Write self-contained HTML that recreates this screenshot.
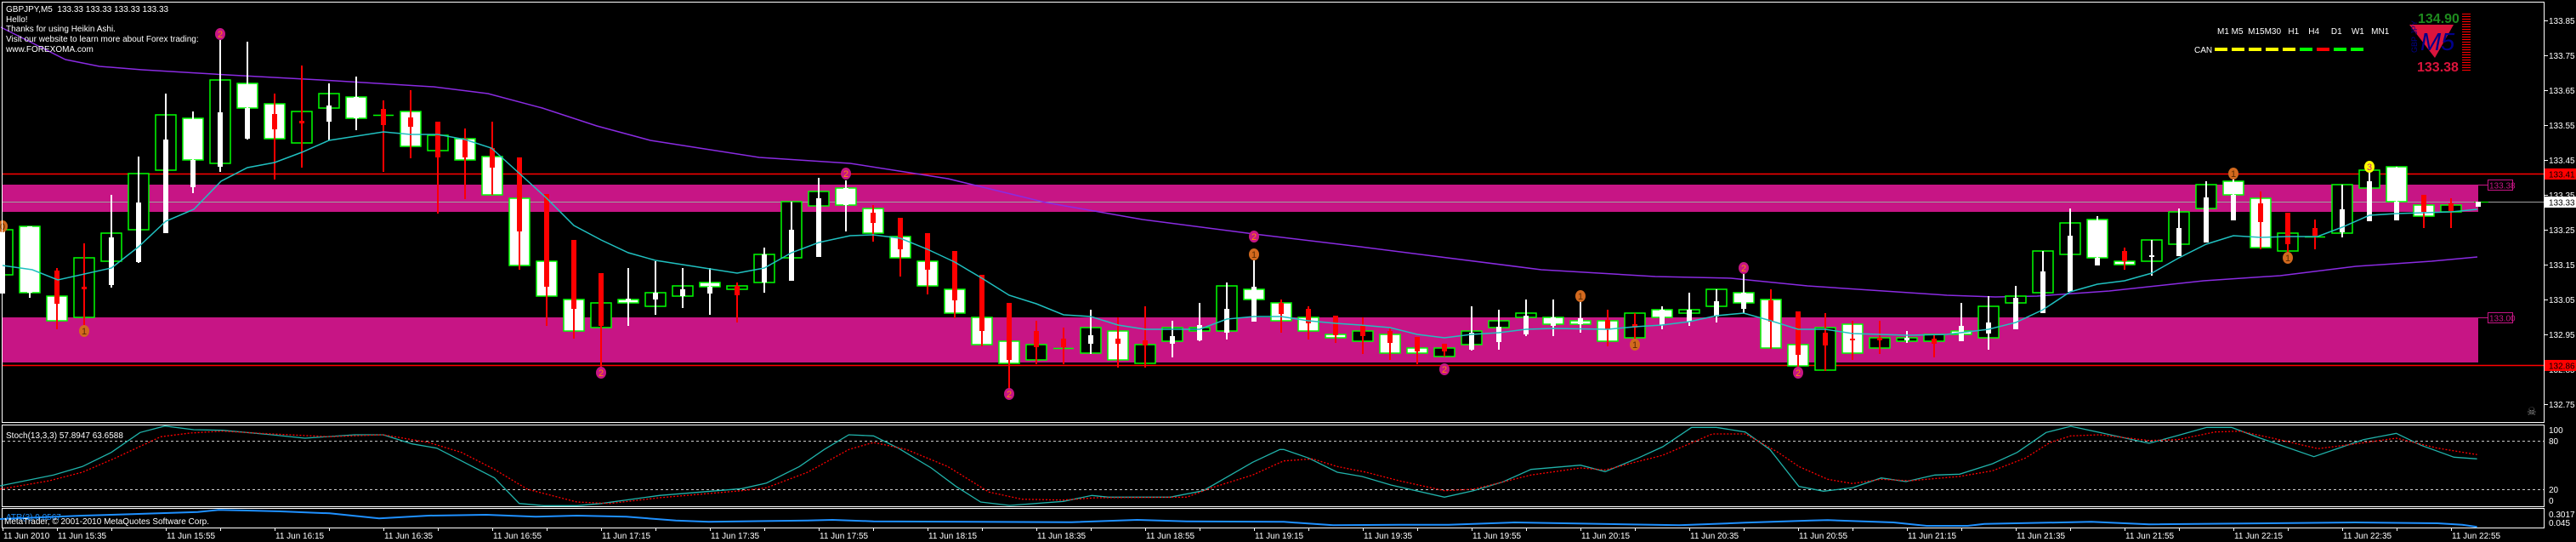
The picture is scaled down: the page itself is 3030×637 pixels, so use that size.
<!DOCTYPE html>
<html><head><meta charset="utf-8">
<style>
html,body{margin:0;padding:0;background:#000;width:3030px;height:637px;overflow:hidden}
svg{display:block}
text{font-family:"Liberation Sans",sans-serif;white-space:pre}
</style></head>
<body>
<svg id="s" width="3030" height="637" xmlns="http://www.w3.org/2000/svg" xml:space="preserve">
<rect x="0" y="0" width="3030" height="637" fill="#000"/>
<g id="bg"></g>
<rect x="2" y="217" width="2913" height="32" fill="#c71585"/>
<rect x="2" y="373" width="2913" height="53" fill="#c71585"/>
<line x1="2" y1="204.5" x2="2993" y2="204.5" stroke="#f00" stroke-width="1.5"/>
<line x1="2" y1="429.5" x2="2993" y2="429.5" stroke="#f00" stroke-width="1.5"/>
<line x1="2" y1="237.5" x2="2993" y2="237.5" stroke="#a0a0a0" stroke-width="1"/>
<line x1="2910" y1="237.5" x2="2927" y2="237.5" stroke="#0f0" stroke-width="1"/>
<line x1="2915" y1="217.5" x2="2926" y2="217.5" stroke="#c71585"/>
<line x1="2915" y1="373.5" x2="2926" y2="373.5" stroke="#c71585"/>
<rect x="2926.5" y="211.5" width="29" height="12" fill="none" stroke="#c71585"/>
<text x="2928" y="221.5" font-size="10" fill="#c71585">133.38</text>
<rect x="2926.5" y="367.5" width="29" height="12" fill="none" stroke="#c71585"/>
<text x="2928" y="377.5" font-size="10" fill="#c71585">133.00</text>
<polyline id="purple" fill="none" stroke="#8a2be2" stroke-width="1.5" points="1,32 43,53 77,70 117,78 167,82 267,88 395,95 510,102 574,110 638,127 702,148 765,165 829,175 893,185 1000,192 1115,210 1230,238 1344,258 1475,275 1600,290 1813,317 1947,325 2036,327 2126,336 2290,347 2347,349 2396,348 2481,342 2592,330 2682,324 2771,313 2860,307 2914,302"/>
<g id="candles"></g>
<polyline fill="none" stroke="#20c0c0" stroke-width="1.5" points="3,312 38,317 68,329 131,315 163,290 195,260 228,246 260,213 291,197 323,191 355,179 387,165 451,155 483,158 515,158 547,164 578,174 610,203 643,233 675,265 707,282 739,297 771,306 835,316 867,321 899,315 931,297 963,285 1000,277 1027,276 1059,280 1091,293 1123,308 1155,327 1187,347 1219,357 1251,370 1283,372 1315,382 1347,387 1379,387 1411,387 1443,375 1475,372 1507,372 1539,377 1571,380 1600,382 1635,385 1667,393 1699,397 1731,393 1763,391 1795,387 1827,386 1891,387 1923,384 1955,382 1987,378 2019,371 2051,368 2083,377 2115,387 2147,387 2179,392 2243,394 2290,393 2339,387 2371,379 2403,364 2435,343 2467,334 2499,330 2531,321 2563,303 2595,287 2627,277 2659,279 2691,278 2726,278 2755,267 2787,253 2819,251 2883,249 2914,246"/>
<g id="marks"></g>
<rect x="2.5" y="2.5" width="2990" height="494" fill="none" stroke="#fff"/>
<rect x="2.5" y="499.5" width="2990" height="96" fill="none" stroke="#fff"/>
<rect x="2.5" y="597.5" width="2990" height="23" fill="none" stroke="#fff"/>
<line x1="3" y1="518.5" x2="2992" y2="518.5" stroke="#ccc" stroke-dasharray="3,3"/>
<line x1="3" y1="575.5" x2="2992" y2="575.5" stroke="#ccc" stroke-dasharray="3,3"/>
<polyline id="stc" fill="none" stroke="#20b2aa" stroke-width="1.3"/>
<polyline id="str" fill="none" stroke="#f00" stroke-width="1.3" stroke-dasharray="2,2"/>
<polyline id="atr" fill="none" stroke="#1e90ff" stroke-width="2"/>
<g font-size="10" fill="#fff">
<text x="7" y="14">GBPJPY,M5  133.33 133.33 133.33 133.33</text>
<text x="7" y="26">Hello!</text>
<text x="7" y="37">Thanks for using Heikin Ashi.</text>
<text x="7" y="49">Visit our website to learn more about Forex trading:</text>
<text x="7" y="61">www.FOREXOMA.com</text>
<text x="7" y="515">Stoch(13,3,3) 57.8947 63.6588</text>
<text x="7" y="611" fill="#1e90ff">ATR(3) 0.0567</text>
<text x="5" y="616">MetaTrader, © 2001-2010 MetaQuotes Software Corp.</text>
</g>
<g font-size="10" fill="#fff">
<text x="2608" y="40">M1 M5  M15M30   H1    H4     D1    W1   MN1</text>
<text x="2581" y="62">CAN</text>
</g>
<g id="dash"></g>
<text x="2844" y="27" font-size="16" font-weight="bold" fill="#1e8b1e">134.90</text>
<polygon points="2834,29 2886,29 2864,68" fill="#dc143c"/>
<text x="2847" y="59" font-size="29" font-style="italic" fill="#00008b">M5</text>
<text x="2843" y="62" font-size="9" fill="#00008b" transform="rotate(-90 2843 62)">GBP JPY</text>
<text x="2843" y="84" font-size="16" font-weight="bold" fill="#dc143c">133.38</text>
<g id="ladder"></g>
<g id="axis" font-size="10" fill="#fff"></g>
<rect x="2993" y="198" width="37" height="13" fill="#f00"/>
<text x="2998" y="208.5" font-size="10" fill="#000">133.41</text>
<rect x="2993" y="231" width="37" height="13" fill="#fff"/>
<text x="2998" y="241.5" font-size="10" fill="#000">133.33</text>
<rect x="2993" y="423" width="37" height="13" fill="#f00"/>
<text x="2998" y="433.5" font-size="10" fill="#000">132.86</text>
<text x="2972" y="488" font-size="13" fill="#888">☠</text>
<g font-size="10" fill="#fff">
<text x="2998" y="509">100</text>
<text x="2998" y="522">80</text>
<text x="2998" y="579">20</text>
<text x="2998" y="592">0</text>
<text x="2998" y="608">0.3017</text>
<text x="2998" y="618">0.045</text>
</g>
<g id="time" font-size="10" fill="#fff"></g>
</svg>
<script>
var NS="http://www.w3.org/2000/svg";
function el(p,t,a,txt){var e=document.createElementNS(NS,t);for(var k in a)e.setAttribute(k,a[k]);if(txt!=null)e.textContent=txt;p.appendChild(e);return e;}
var D=[
[270,323,'b','w',264,345,270,345],[266,344,'w','w',266,350,266,344],[348,377,'w','r',315,387,318,357],[303,373,'b','r',286,383,337,340],
[274,307,'b','w',229,338,279,335],[204,270,'b','w',184,309,238,308],[135,200,'b','w',110,274,164,274],[139,188,'w','w',131,227,188,220],
[94,192,'b','w',47,202,132,196],[98,127,'w','w',49,164,127,163],[122,163,'w','r',110,211,134,152],[131,168,'b','r',77,197,142,145],
[110,127,'b','w',98,165,124,143],[114,139,'w','w',90,153,114,139],[135,135,'d','r',118,202,128,147],[131,172,'w','r',106,186,138,149],
[159,177,'b','r',143,251,143,185],[163,188,'w','r',151,234,163,185],[184,229,'w','r',143,229,174,197],[233,312,'w','r',185,317,185,272],
[307,348,'w','r',228,383,228,337],[352,389,'w','r',282,398,282,363],[356,385,'b','r',321,437,321,383],[352,356,'w','w',315,383,351,355],
[344,360,'b','w',307,370,344,352],[336,348,'b','w',315,362,340,348],[332,337,'w','w',315,370,337,345],[336,340,'b','r',332,379,336,347],
[299,332,'b','w',291,344,299,332],[237,303,'b','w',237,330,270,330],[225,242,'b','w',209,302,233,302],[221,241,'w','w',212,272,221,241],
[245,274,'w','r',241,284,250,262],[278,303,'w','r',256,325,256,293],[307,336,'w','r',274,346,274,317],[340,368,'w','r',295,374,295,353],
[373,405,'w','r',323,407,323,389],[401,427,'w','r',356,463,356,423],[405,423,'b','r',377,428,389,408],[409,409,'d','r',385,428,398,408],
[385,415,'b','w',364,416,394,404],[389,423,'w','r',373,432,398,404],[405,427,'b','r',360,432,400,406],[385,401,'b','w',377,420,395,404],
[385,389,'b','w',356,401,382,400],[336,389,'b','w',332,399,363,391],[340,352,'w','w',303,378,337,378],[356,377,'w','r',352,391,356,369],
[373,389,'w','r',360,399,363,380],[393,397,'w','r',371,403,371,394],
[389,401,'b','r',373,416,382,395],[393,415,'w','r',386,423,389,403],[409,415,'w','r',396,428,396,413],[409,419,'b','r',404,419,404,413],
[389,405,'b','w',360,412,391,411],[377,385,'b','w',364,411,384,402],[368,373,'b','w',352,395,371,393],[373,381,'w','w',352,395,373,383],
[377,381,'w','w',353,391,374,381],[377,401,'w','r',364,407,376,387],[368,397,'b','r',368,400,381,385],[364,373,'w','w',360,387,364,382],
[364,368,'b','w',344,383,364,378],[340,360,'b','w',340,379,354,372],[344,356,'w','w',322,368,344,363],[352,409,'w','r',340,410,353,378],
[405,430,'w','r',366,431,366,417],[385,435,'b','r',368,436,391,406],[381,415,'w','r',377,423,398,399],[397,409,'b','r',377,416,397,400],
[397,401,'b','w',389,403,397,400],[393,401,'b','r',393,420,398,404],
[389,393,'w','w',356,401,383,401],[360,397,'b','w',348,411,379,392],[348,356,'b','w',336,387,350,387],[295,344,'b','w',295,368,319,368],
[262,299,'b','w',245,343,277,343],[258,303,'w','w',254,312,303,312],[307,311,'w','r',291,317,295,307],[282,307,'b','w',282,324,300,302],
[249,287,'b','w',245,301,268,301],[217,245,'b','w',213,285,232,285],[213,229,'w','w',204,259,229,259],[233,291,'w','r',225,293,239,261],
[274,295,'b','r',250,299,250,287],[278,278,'d','r',258,293,268,277],[217,274,'b','w',217,279,246,273],[200,221,'b','w',200,260,213,260],
[196,237,'w','w',196,259,237,259],[241,254,'w','r',229,268,229,249],[241,249,'b','r',233,268,239,248],[237,243,'n','w',237,243,237,243]
];
var g=document.getElementById('candles');
D.forEach(function(c,i){
 var x=3+32*i;
 if(c[2]=='d'){el(g,'line',{x1:x-12,y1:c[0]+.5,x2:x+12,y2:c[0]+.5,stroke:'#0f0','stroke-width':1.5});}
 else if(c[2]!='n'){el(g,'rect',{x:x-12,y:c[0],width:24,height:Math.max(2,c[1]-c[0]),fill:c[2]=='w'?'#fff':'#000',stroke:'#0f0','stroke-width':1.5});}
 var col=c[3]=='w'?'#fff':'#f00';
 el(g,'rect',{x:x-1,y:c[4],width:2,height:c[5]-c[4],fill:col});
 el(g,'rect',{x:x-3,y:c[6],width:6,height:Math.max(2,c[7]-c[6]),fill:col});
});
var M=[[3,266,'0','o'],[99,389,'1','o'],[259,40,'2','p'],[995,204,'2','p'],[707,438,'2','p'],[1187,463,'2','p'],[1475,278,'2','p'],[1475,299,'1','o'],[1699,434,'2','p'],[1859,348,'1','o'],[1923,405,'1','o'],[2051,315,'2','p'],[2115,438,'2','p'],[2627,204,'1','o'],[2691,303,'1','o'],[2787,196,'3','y']];
var mg=document.getElementById('marks');
M.forEach(function(m){
 var f=m[3]=='p'?'#c71585':m[3]=='o'?'#d2691e':'#ffff00';
 var t=m[3]=='p'?'#ff8c00':m[3]=='o'?'#5a2a00':'#c71585';
 el(mg,'ellipse',{cx:m[0],cy:m[1],rx:6,ry:7,fill:f});
 el(mg,'text',{x:m[0]-3,y:m[1]+4,'font-size':11,fill:t},m[2]);
});
function conv(arr,off,sx){return arr.map(function(p){return ((off+p[0]/sx).toFixed(1))+','+(495+p[1]/3).toFixed(1);}).join(' ');}
var s=1.0316;
var c1=[[0,228],[65,190],[100,160],[135,110],[170,40],[200,17],[235,30],[270,32],[330,48],[370,60],[430,48],[465,48],[500,80],[530,95],[600,200],[630,290],[660,298],[700,298],[730,290],[800,262],[900,238],[930,218],[970,160],[1000,100],[1030,48],[1060,52],[1090,95],[1130,165],[1160,230],[1190,285],[1225,297],[1290,283],[1325,262],[1345,268],[1420,268],[1460,245],[1520,145],[1553,100]];
var c2=[[0,100],[30,130],[65,180],[95,195],[130,225],[195,268],[230,245],[265,215],[300,170],[360,155],[390,178],[430,130],[460,90],[495,22],[525,22],[560,38],[590,100],[625,230],[655,247],[690,235],[725,200],[755,213],[790,190],[820,187],[860,150],[890,110],[925,40],[955,18],[990,40],[1050,78],[1085,50],[1120,22],[1150,22],[1185,60],[1250,125],[1310,65],[1350,43],[1380,85],[1420,127],[1448,133]];
var r1=[[0,240],[60,210],[100,180],[140,130],[195,55],[230,42],[270,35],[330,45],[400,55],[465,48],[520,75],[560,110],[600,170],[640,240],[700,285],[740,290],[800,270],[900,245],[930,235],[980,180],[1030,100],[1060,75],[1100,100],[1150,160],[1200,250],[1240,275],[1290,278],[1330,270],[1440,268],[1470,235],[1520,190],[1550,150]];
var r2=[[0,140],[35,133],[65,160],[100,180],[140,210],[195,245],[230,240],[300,190],[360,165],[390,172],[460,120],[520,45],[560,45],[600,110],[625,160],[660,205],[690,220],[725,205],[760,210],[820,195],[860,175],[900,130],[930,75],[955,52],[990,48],[1050,68],[1085,65],[1130,38],[1160,35],[1200,60],[1255,97],[1300,80],[1350,60],[1400,95],[1448,118]];
var a1=[[0,345],[100,333],[160,328],[240,320],[265,313],[300,315],[340,318],[400,325],[460,343],[520,333],[590,330],[650,337],[700,333],[760,337],[820,350],[860,355],[980,350],[1010,348],[1060,353],[1300,356],[1380,348],[1440,353],[1550,355]];
var a2=[[0,355],[60,367],[140,365],[200,365],[280,357],[480,367],[560,358],[640,350],[660,349],[740,357],[780,369],[830,369],[850,362],[980,355],[1050,364],[1300,357],[1400,360],[1430,365],[1448,373]];
document.getElementById('stc').setAttribute('points',conv(c1,0,s)+' '+conv(c2,1510,s));
document.getElementById('str').setAttribute('points',conv(r1,0,s)+' '+conv(r2,1510,s));
document.getElementById('atr').setAttribute('points',conv(a1,0,s)+' '+conv(a2,1510,s));
var ax=document.getElementById('axis');
for(var k=0;k<12;k++){var p=(133.85-k*0.1).toFixed(2),y=24+k*41;
 el(ax,'line',{x1:2993,y1:y+.5,x2:2997,y2:y+.5,stroke:'#fff'});
 el(ax,'text',{x:2998,y:y+4},p);}
var dg=document.getElementById('dash');
['#ff0','#ff0','#ff0','#ff0','#ff0','#0f0','#f00','#0f0','#0f0'].forEach(function(c,i){el(dg,'rect',{x:2605+i*20,y:56,width:15,height:4,fill:c});});
var lg=document.getElementById('ladder');
for(var y=16;y<=82;y+=3)el(lg,'rect',{x:2896,y:y,width:10,height:1,fill:'#f00'});
var tg=document.getElementById('time');
el(tg,'line',{x1:3.5,y1:620,x2:3.5,y2:624,stroke:'#fff'});
el(tg,'text',{x:4,y:633},'11 Jun 2010');
for(var k=0;k<=44;k+=2){var mins=15*60+35+k*10;var hh=Math.floor(mins/60),mm=mins%60;var x=67+k*64;
 el(tg,'line',{x1:x+.5,y1:620,x2:x+.5,y2:624,stroke:'#fff'});
 el(tg,'text',{x:x+1,y:633},'11 Jun '+hh+':'+(mm<10?'0':'')+mm);}
for(var k=1;k<=44;k+=2){var x=67+k*64;el(tg,'line',{x1:x+.5,y1:620,x2:x+.5,y2:624,stroke:'#fff'});}
</script>
</body></html>
